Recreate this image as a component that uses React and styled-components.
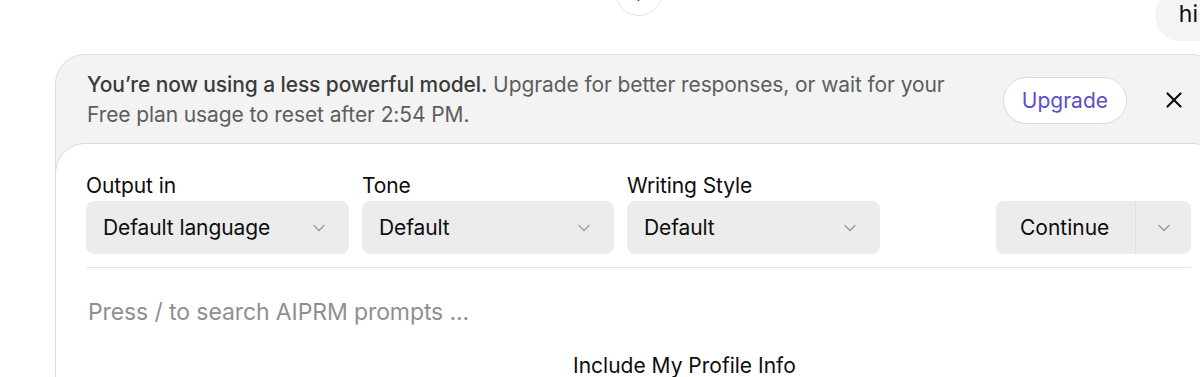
import React from "react";
import styled, { createGlobalStyle } from "styled-components";
import { ArrowDown, ChevronDown, X } from "lucide-react";

const GlobalStyle = createGlobalStyle`
  html, body {
    margin: 0;
    padding: 0;
    background: #fff;
    overflow: hidden;
  }
  body {
    font-family: Inter, "Noto Sans", sans-serif;
    color: #0d0d0d;
    -webkit-font-smoothing: antialiased;
  }
`;

const Page = styled.div`
  position: relative;
  width: 1200px;
  height: 377px;
  overflow: hidden;
`;

const Column = styled.div`
  position: relative;
  margin-left: 55px;
  width: 1167px;
`;

const ChatArea = styled.div`
  height: 54px;
  display: flex;
  justify-content: flex-end;
  align-items: flex-end;
`;

const Bubble = styled.div`
  margin-bottom: 9px;
  padding: 8px 24px 10px 24px;
  background: #f4f4f4;
  border-radius: 26px;
  font-size: 23px;
  line-height: 34px;
  height: 52px;
  box-sizing: border-box;
  transform: translateY(-4px);
`;

const ScrollButton = styled.button`
  position: absolute;
  left: 50%;
  top: -31px;
  transform: translateX(-50%);
  width: 47px;
  height: 47px;
  border-radius: 50%;
  border: 1px solid #e3e3e3;
  background: #fff;
  display: flex;
  align-items: center;
  justify-content: center;
  padding: 0;
  color: #0d0d0d;
`;

const Composer = styled.div`
  border: 1px solid #dcdcdc;
  border-radius: 30px 30px 0 0;
  background: #f3f3f3;
  overflow: hidden;
  height: 330px;
`;

const Banner = styled.div`
  display: flex;
  align-items: center;
  padding: 15px 34px 13px 31px;
  gap: 20px;
`;

const BannerText = styled.p`
  margin: 0;
  flex: 1;
  font-size: 21px;
  line-height: 30px;
  color: #5d5d5d;
  letter-spacing: -0.1px;
  white-space: nowrap;

  strong {
    font-weight: 500;
    color: #3b3b3b;
  }
`;

const UpgradeButton = styled.button`
  height: 47px;
  padding: 0 18px;
  border-radius: 24px;
  border: 1px solid #d9d9d9;
  background: #fff;
  color: #5b50c8;
  font-family: inherit;
  font-size: 21px;
  margin-right: 14px;
`;

const CloseButton = styled.button`
  border: none;
  background: none;
  padding: 0;
  display: flex;
  color: #0d0d0d;
`;

const Card = styled.div`
  margin: 0 -1px;
  background: #fff;
  border: 1px solid #dcdcdc;
  border-bottom: none;
  border-radius: 30px 30px 0 0;
  padding: 30px 30px 0 30px;
  height: 300px;
`;

const Controls = styled.div`
  display: flex;
  align-items: flex-end;
  gap: 13px;
`;

const Field = styled.div`
  display: flex;
  flex-direction: column;
  gap: 3px;
  width: ${(p) => p.width}px;
`;

const Label = styled.span`
  font-size: 21px;
  line-height: 24px;
  color: #0d0d0d;
  letter-spacing: -0.1px;
`;

const Select = styled.div`
  height: 53px;
  box-sizing: border-box;
  border-radius: 8px;
  background: #ececec;
  display: flex;
  align-items: center;
  justify-content: space-between;
  padding: 0 20px 0 17px;
  font-size: 21px;
  color: #0d0d0d;
  letter-spacing: -0.1px;
  svg {
    color: #9b9b9b;
  }
`;

const SplitButton = styled.div`
  margin-left: auto;
  display: flex;
  height: 53px;
  border-radius: 8px;
  background: #ececec;
  overflow: hidden;
`;

const SplitMain = styled.div`
  width: 140px;
  box-sizing: border-box;
  display: flex;
  align-items: center;
  padding-left: 24px;
  font-size: 21px;
  border-right: 1px solid #e0e0e0;
`;

const SplitArrow = styled.div`
  width: 55px;
  display: flex;
  align-items: center;
  justify-content: center;
  color: #9b9b9b;
`;

const Divider = styled.hr`
  margin: 13px 0 0 0;
  border: none;
  border-top: 1px solid #e5e5e5;
`;

const Prompt = styled.div`
  padding: 28px 0 0 2px;
  font-size: 23px;
  line-height: 32px;
  color: #8f8f8f;
  letter-spacing: -0.1px;
`;

const ProfileRow = styled.div`
  padding: 26px 0 0 487px;
  font-size: 21px;
  line-height: 24px;
  color: #0d0d0d;
`;

const Dropdown = ({ value }) => (
  <Select>
    <span>{value}</span>
    <ChevronDown size={20} strokeWidth={1.6} />
  </Select>
);

export default function App() {
  return (
    <Page>
      <GlobalStyle />
      <Column>
        <ScrollButton>
          <ArrowDown size={22} strokeWidth={2.4} />
        </ScrollButton>
        <ChatArea>
          <Bubble>hi</Bubble>
        </ChatArea>
        <Composer>
          <Banner>
            <BannerText>
              <strong>You’re now using a less powerful model.</strong> Upgrade for better responses, or wait for your
              <br />
              Free plan usage to reset after 2:54 PM.
            </BannerText>
            <UpgradeButton>Upgrade</UpgradeButton>
            <CloseButton>
              <X size={26} strokeWidth={2} />
            </CloseButton>
          </Banner>
          <Card>
            <Controls>
              <Field width={263}>
                <Label>Output in</Label>
                <Dropdown value="Default language" />
              </Field>
              <Field width={252}>
                <Label>Tone</Label>
                <Dropdown value="Default" />
              </Field>
              <Field width={253}>
                <Label>Writing Style</Label>
                <Dropdown value="Default" />
              </Field>
              <SplitButton>
                <SplitMain>Continue</SplitMain>
                <SplitArrow>
                  <ChevronDown size={20} strokeWidth={1.6} />
                </SplitArrow>
              </SplitButton>
            </Controls>
            <Divider />
            <Prompt>Press / to search AIPRM prompts ...</Prompt>
            <ProfileRow>Include My Profile Info</ProfileRow>
          </Card>
        </Composer>
      </Column>
    </Page>
  );
}
